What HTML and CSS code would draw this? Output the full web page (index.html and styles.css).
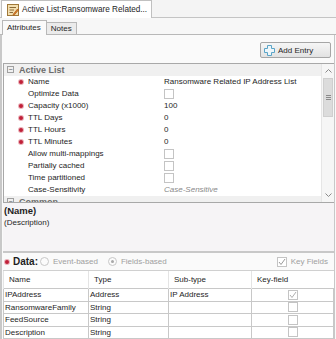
FILE: index.html
```html
<!DOCTYPE html>
<html>
<head>
<meta charset="utf-8">
<link rel="stylesheet" href="styles.css">
</head>
<body>
<div class="doc-tabs">
  <div class="doc-tab">
    <svg class="doc-icon" width="12" height="12" viewBox="0 0 12 12">
      <rect x="0.5" y="0.5" width="11" height="11" fill="#f3dfb0" stroke="#a07838"/>
      <line x1="2.5" y1="3.5" x2="9" y2="3.5" stroke="#8a6a38"/>
      <line x1="2.5" y1="6" x2="7" y2="6" stroke="#8a6a38"/>
      <line x1="2.5" y1="8.5" x2="6" y2="8.5" stroke="#8a6a38"/>
      <path d="M6 10.5 L10.5 5 L11.5 6 L7 11.3 Z" fill="#e08020" stroke="#9a4a10" stroke-width="0.6"/>
    </svg>
    <span>Active List:Ransomware Related...</span>
  </div>
</div>
<div class="sub-tabs">
  <div class="sub-tab active">Attributes</div>
  <div class="sub-tab">Notes</div>
</div>
<div class="panel">
  <div class="toolbar">
    <button class="btn">
      <svg width="11" height="11" viewBox="0 0 11 11">
        <path d="M3.5 0.5 H7.5 V3.5 H10.5 V7.5 H7.5 V10.5 H3.5 V7.5 H0.5 V3.5 H3.5 Z" fill="#eef6fa" stroke="#5aa5c8"/>
      </svg>
      <span>Add Entry</span>
    </button>
  </div>
  <div class="propgrid">
    <div class="props">
      <div class="cat"><span class="toggle">−</span>Active List</div>
      <div class="row"><span class="req"></span><span class="pname">Name</span><span class="pval">Ransomware Related IP Address List</span></div>
      <div class="row"><span class="noreq"></span><span class="pname">Optimize Data</span><span class="pval"><span class="cb"></span></span></div>
      <div class="row"><span class="req"></span><span class="pname">Capacity (x1000)</span><span class="pval">100</span></div>
      <div class="row"><span class="req"></span><span class="pname">TTL Days</span><span class="pval">0</span></div>
      <div class="row"><span class="req"></span><span class="pname">TTL Hours</span><span class="pval">0</span></div>
      <div class="row"><span class="req"></span><span class="pname">TTL Minutes</span><span class="pval">0</span></div>
      <div class="row"><span class="noreq"></span><span class="pname">Allow multi-mappings</span><span class="pval"><span class="cb"></span></span></div>
      <div class="row"><span class="noreq"></span><span class="pname">Partially cached</span><span class="pval"><span class="cb"></span></span></div>
      <div class="row"><span class="noreq"></span><span class="pname">Time partitioned</span><span class="pval"><span class="cb"></span></span></div>
      <div class="row"><span class="noreq"></span><span class="pname">Case-Sensitivity</span><span class="pval muted">Case-Sensitive</span></div>
      <div class="cat"><span class="toggle">−</span>Common</div>
    </div>
    <div class="scrollbar">
      <div class="sb-arrow">
        <svg width="7" height="4" viewBox="0 0 7 4"><path d="M0.5 3.5 L3.5 0.5 L6.5 3.5" fill="none" stroke="#8a8a8a"/></svg>
      </div>
      <div class="sb-track">
        <div class="sb-thumb">
          <svg width="5" height="5" viewBox="0 0 5 5"><path d="M0 0.5H5M0 2.5H5M0 4.5H5" stroke="#8a8a8a"/></svg>
        </div>
      </div>
      <div class="sb-arrow">
        <svg width="7" height="4" viewBox="0 0 7 4"><path d="M0.5 0.5 L3.5 3.5 L6.5 0.5" fill="none" stroke="#8a8a8a"/></svg>
      </div>
    </div>
  </div>
  <div class="desc">
    <div class="desc-title">(Name)</div>
    <div>(Description)</div>
  </div>
  <div class="data-row">
    <span class="req"></span>
    <span class="data-label">Data:</span>
    <span class="radio"></span><span class="dim">Event-based</span>
    <span class="radio on"></span><span class="dim">Fields-based</span>
    <span class="spacer"></span>
    <span class="cb checked"><svg width="8" height="8" viewBox="0 0 8 8"><path d="M1 4 L3 6.5 L7 1" fill="none" stroke="#9a9a9a" stroke-width="1"/></svg></span>
    <span class="dim">Key Fields</span>
  </div>
  <table class="fields">
    <thead>
      <tr><th>Name</th><th>Type</th><th>Sub-type</th><th>Key-field</th></tr>
    </thead>
    <tbody>
      <tr><td>IPAddress</td><td>Address</td><td>IP Address</td><td class="kf"><span class="cb checked"><svg width="8" height="8" viewBox="0 0 8 8"><path d="M1 4 L3 6.5 L7 1" fill="none" stroke="#b0b0b0" stroke-width="1"/></svg></span></td></tr>
      <tr><td>RansomwareFamily</td><td>String</td><td></td><td class="kf"><span class="cb"></span></td></tr>
      <tr><td>FeedSource</td><td>String</td><td></td><td class="kf"><span class="cb"></span></td></tr>
      <tr><td>Description</td><td>String</td><td></td><td class="kf"><span class="cb"></span></td></tr>
    </tbody>
  </table>
</div>
</body>
</html>
```

FILE: styles.css
```css
* { box-sizing: border-box; }
html, body {
  margin: 0;
  padding: 0;
}
body {
  width: 336px;
  height: 339px;
  overflow: hidden;
  background: #f9f9f9;
  font-family: "Liberation Sans", Arial, sans-serif;
  font-size: 8px;
  color: #1e1e1e;
}

/* document tab strip */
.doc-tabs {
  height: 18px;
  display: flex;
  align-items: flex-end;
  border-bottom: 1px solid #c4c4c4;
  background: #f4f4f4;
}
.doc-tab {
  width: 151px;
  height: 18px;
  margin-left: 1px;
  margin-bottom: -1px;
  border: 1px solid #c0c0c0;
  border-bottom: none;
  background: #ffffff;
  display: flex;
  align-items: center;
  gap: 3px;
  padding-left: 5px;
  font-size: 8.2px;
}
.doc-icon { flex: none; }

/* sub tabs */
.sub-tabs {
  height: 17px;
  display: flex;
  align-items: flex-end;
  padding-left: 2px;
  border-bottom: 1px solid #b8b8b8;
  background: #f7f7f7;
}
.sub-tab {
  height: 12px;
  padding: 0 4px;
  border: 1px solid #b8b8b8;
  border-bottom: none;
  background: #ebebeb;
  display: flex;
  align-items: center;
  margin-left: -1px;
}
.sub-tab.active {
  height: 15px;
  margin-bottom: -1px;
  margin-left: 0;
  background: #fafafa;
  padding: 0 5px 1px 4px;
  position: relative;
  z-index: 1;
}

/* main panel */
.panel {
  margin: 0 1px 0 0;
  border-left: 2px solid #c8c8c8;
  border-right: 1px solid #c8c8c8;
  background: #fafafa;
  height: 304px;
  display: flex;
  flex-direction: column;
}
.toolbar {
  height: 28px;
  display: flex;
  justify-content: flex-end;
  align-items: flex-start;
  padding: 7px 3px 0 0;
}
.btn {
  width: 71px;
  height: 16px;
  border: 1px solid #a6a6a6;
  border-radius: 2px;
  background: linear-gradient(#f6f6f6, #e2e2e2);
  font: inherit;
  color: #1e1e1e;
  display: flex;
  align-items: center;
  gap: 3px;
  padding: 0 0 0 3px;
}

/* property grid */
.propgrid {
  margin-left: 1px;
  height: 141px;
  border: 1px solid #a8a8a8;
  border-right: none;
  background: #ffffff;
  display: flex;
  overflow: hidden;
}
.props {
  flex: 1;
  overflow: hidden;
}
.cat {
  height: 12px;
  display: flex;
  align-items: center;
  background: #f0f0f0;
  color: #6c6c6c;
  font-weight: bold;
  font-size: 9px;
}
.toggle {
  width: 7px;
  height: 7px;
  border: 1px solid #a0a0a0;
  margin: 0 5px 0 3px;
  font-size: 7px;
  line-height: 5px;
  text-align: center;
  color: #505050;
  font-weight: normal;
}
.row {
  height: 12px;
  display: flex;
  align-items: center;
}
.req, .noreq {
  width: 4px;
  height: 4px;
  margin: 0 5px 0 15px;
  flex: none;
}
.req {
  border-radius: 50%;
  background: #c02038;
  box-shadow: 0 0 0 1px #eab0b8;
}
.pname {
  width: 136px;
  flex: none;
}
.pval {
  display: flex;
  align-items: center;
}
.muted {
  color: #8a8a8a;
  font-style: italic;
}
.cb {
  width: 10px;
  height: 10px;
  border: 1px solid #c4c4c4;
  background: #ffffff;
  display: inline-flex;
  align-items: center;
  justify-content: center;
}

/* scrollbar */
.scrollbar {
  width: 13px;
  flex: none;
  background: #f6f6f6;
  border-left: 1px solid #e6e6e6;
  display: flex;
  flex-direction: column;
}
.sb-arrow {
  height: 14px;
  display: flex;
  align-items: center;
  justify-content: center;
}
.sb-track {
  flex: 1;
}
.sb-thumb {
  height: 39px;
  margin: 0 1px;
  background: #dcdcdc;
  border: 1px solid #cfcfcf;
  display: flex;
  align-items: center;
  justify-content: center;
}

/* description */
.desc {
  margin-left: 1px;
  height: 50px;
  border-bottom: 2px solid #c8c8c8;
  background: #f6f4f6;
  padding: 2px 0 0 1px;
  line-height: 12px;
}
.desc-title {
  font-weight: bold;
  font-size: 9.5px;
}

/* data row */
.data-row {
  height: 17px;
  display: flex;
  align-items: center;
  padding-right: 4px;
}
.data-row .req {
  margin: 0 4px 0 3px;
}
.data-label {
  font-weight: bold;
  font-size: 10px;
  margin-right: 2px;
}
.radio {
  width: 9px;
  height: 9px;
  border-radius: 50%;
  border: 1px solid #c8c8c8;
  background: #fbfbfb;
  margin-right: 4px;
  display: inline-flex;
  align-items: center;
  justify-content: center;
}
.radio.on::after {
  content: "";
  width: 3px;
  height: 3px;
  border-radius: 50%;
  background: #a8a8a8;
}
.dim {
  color: #a0a0a0;
  margin-right: 10px;
}
.data-row .dim:last-child { margin-right: 2px; }
.spacer { flex: 1; }
.data-row .cb { margin-right: 4px; }

/* fields table */
.fields {
  margin-left: 1px;
  width: 331px;
  border-collapse: collapse;
  background: #ffffff;
  table-layout: fixed;
}
.fields th {
  height: 18px;
  font-weight: normal;
  text-align: left;
  padding: 0 0 0 5px;
  border-left: 1px solid #e4e4e4;
  border-top: 1px solid #d0d0d0;
}
.fields th:nth-child(1) { width: 85px; }
.fields th:nth-child(2) { width: 80px; }
.fields th:nth-child(3) { width: 83px; }
.fields td {
  height: 12.5px;
  padding: 0 0 0 1px;
  border: 1px solid #c8c8c8;
  white-space: nowrap;
}
.fields td.kf {
  text-align: center;
  padding: 0;
}
.fields td.kf .cb {
  vertical-align: middle;
}
```
